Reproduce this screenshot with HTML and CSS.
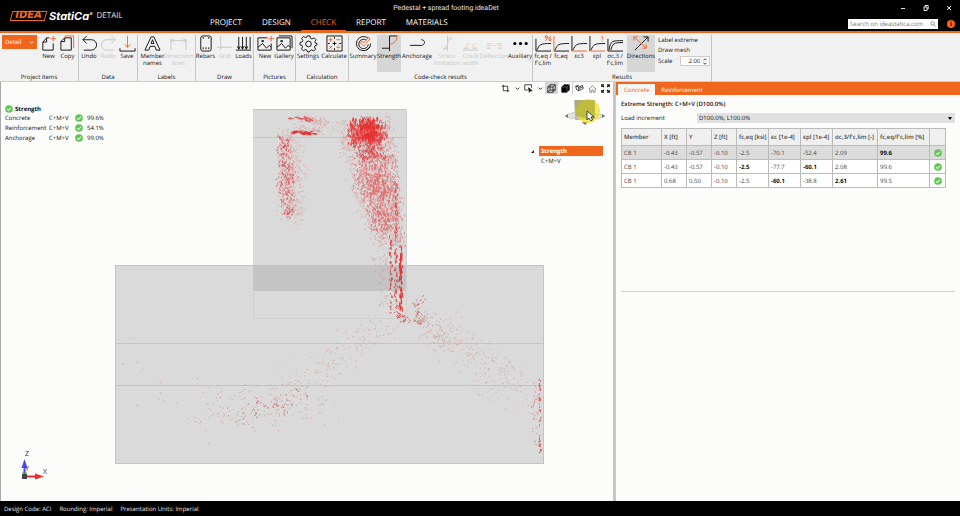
FILE: index.html
```html
<!DOCTYPE html>
<html lang="en">
  <head>
    <meta charset="UTF-8" />
    <meta name="viewport" content="width=device-width, initial-scale=1.0" />
    <title>Pedestal + spread footing.ideaDet</title>
    <link rel="stylesheet" href="styles.css" />
  </head>
  <body>
    <svg class="sprite" aria-hidden="true">
      <symbol id="check" viewBox="0 0 10 10">
        <circle cx="5" cy="5" r="4.8" fill="#62c554" />
        <path d="M2.6 5.2 4.4 6.9 7.5 3.4" fill="none" stroke="#fff" stroke-width="1.3" />
      </symbol>
      <symbol id="chevron" viewBox="0 0 6 6">
        <path d="M1 2 3 4 5 2" fill="none" stroke="currentColor" />
      </symbol>
    </svg>

    <header class="header">
      <div class="brand">
        <span class="brand-idea">IDEA</span>
        <span class="brand-statica">StatiCa<sup>®</sup></span>
        <span class="brand-app">DETAIL</span>
      </div>
      <div class="title">Pedestal + spread footing.ideaDet</div>
      <div class="window-buttons">
        <button aria-label="Minimize"><svg viewBox="0 0 8 8"><path d="M2 4.5h4" /></svg></button>
        <button aria-label="Restore"><svg viewBox="0 0 8 8"><path d="M2 3h3v3.5H2zM3 3V1.500h3.200V5H5" /></svg></button>
        <button aria-label="Close"><svg viewBox="0 0 8 8"><path d="M2 2l4 4M6 2 2 6" /></svg></button>
      </div>
      <nav class="nav">
        <a href="#project">PROJECT</a>
        <a href="#design">DESIGN</a>
        <a href="#check" class="active">CHECK</a>
        <a href="#report">REPORT</a>
        <a href="#materials">MATERIALS</a>
      </nav>
      <div class="search-row">
        <form class="search">
          <input type="text" placeholder="Search on ideastatica.com" aria-label="Search on ideastatica.com" />
          <svg viewBox="0 0 8 8"><circle cx="3.500" cy="3.300" r="2.300" /><path d="M5.200 5 7.500 7.300" /></svg>
        </form>
        <button class="info" aria-label="Info">i</button>
      </div>
    </header>

    <div class="ribbon">
      <section class="group group-items">
        <div class="tools">
          <button class="detail-button">Detail <svg viewBox="0 0 6 6"><use href="#chevron" /></svg></button>
          <button class="tool">
            <svg viewBox="0 0 18 18"><path d="M10 3H7L3 7.500V16h11V9M7 3v4.500H3" /><path class="accent" d="M14 1v6M11 4h6" /></svg>
            New
          </button>
          <button class="tool">
            <svg viewBox="0 0 18 18"><path d="M6 3h7v13H2V7zM6 3v4H2" /><path class="accent" d="M6 1h9.500v13" /></svg>
            Copy
          </button>
        </div>
        <h3>Project items</h3>
      </section>

      <section class="group">
        <div class="tools">
          <button class="tool">
            <svg viewBox="0 0 18 18"><path d="M6 1 2 5l4 4M2 5h9a5.500 5.500 0 0 1 0 11H3" /></svg>
            Undo
          </button>
          <button class="tool" disabled>
            <svg viewBox="0 0 18 18"><path d="m12 1 4 4-4 4M16 5H7a5.500 5.500 0 0 0 0 11h8" /></svg>
            Redo
          </button>
          <button class="tool">
            <svg viewBox="0 0 18 18"><path d="M1 14v3h16v-3" /><path class="accent" d="M9 1v12M6 10l3 3 3-3" /></svg>
            Save
          </button>
        </div>
        <h3>Data</h3>
      </section>

      <section class="group">
        <div class="tools">
          <button class="tool medium">
            <svg viewBox="0 0 18 18"><path d="M1 16 7.500 2h3L17 16h-4l-1.500-4h-5L5 16zM7.500 9 9 5l1.500 4z" /></svg>
            Member<br />names
          </button>
          <button class="tool wide" disabled>
            <svg viewBox="0 0 18 18"><path d="M1 4v12M17 4v12M1 6h16M4 4 1 6l3 2M14 4l3 2-3 2" /></svg>
            Dimension<br />lines
          </button>
        </div>
        <h3>Labels</h3>
      </section>

      <section class="group">
        <div class="tools">
          <button class="tool">
            <svg viewBox="0 0 18 18"><rect x="4" y="1" width="11" height="16" rx="2" /><path d="M6 3h1M12 3h1M6 14h1M9 14h1M12 14h1" stroke-width="2" /></svg>
            Rebars
          </button>
          <button class="tool" disabled>
            <svg viewBox="0 0 18 18"><path d="M5 1v15M1 13h16" /></svg>
            Grid
          </button>
          <button class="tool">
            <svg viewBox="0 0 18 18"><path d="M1 16h16M4 2v13M8 2v13M12 2v13M16 2v13M2.500 12 4 15l1.500-3M6.500 12 8 15l1.500-3M10.500 12l1.500 3 1.500-3" /></svg>
            Loads
          </button>
        </div>
        <h3>Draw</h3>
      </section>

      <section class="group">
        <div class="tools">
          <button class="tool">
            <svg viewBox="0 0 18 18"><path d="M11 3H1v13h14V9M1 13l5-4 4 5 3-3 2 2M5 6h2v1H5z" /><path class="accent" d="M15 1v6M12 4h6" /></svg>
            New
          </button>
          <button class="tool">
            <svg viewBox="0 0 18 18"><path d="M3 1h14v13M1 3h14v13H1zM1 13l5-4 4 5 3-3 2 2M5 6h2v1H5z" /></svg>
            Gallery
          </button>
        </div>
        <h3>Pictures</h3>
      </section>

      <section class="group">
        <div class="tools">
          <button class="tool medium">
            <svg viewBox="0 0 18 18"><path d="M7.500 1h3l.6 2.500 1.500.7L15 3l2 2-1.300 2.200.5 1.300L18 9v1.500l-2 .8-.6 1.500L16.500 15l-2 2-2.200-1.200-1.500.6L10 18H8l-.7-2-1.500-.6L3.600 16.700l-2-2 1.100-2.200-.6-1.500L0 10.500V8l2.300-.7.600-1.500L1.800 3.600l2-2L6 2.800l1-.4z" /><circle cx="9" cy="9.500" r="3" /></svg>
            Settings
          </button>
          <button class="tool wide">
            <svg viewBox="0 0 18 18"><path d="M1 1h16v16H1zM9 2v2M9 7v4M9 14v2M2 9h2M7 9h4M14 9h2" /><path class="accent" d="M3 5h4M5 3v4M11 5h4M3.500 11.500l3 3M6.500 11.500l-3 3M11 13h4M12.500 11.300h1M12.500 14.700h1" /></svg>
            Calculate
          </button>
        </div>
        <h3>Calculation</h3>
      </section>

      <section class="group">
        <div class="tools">
          <button class="tool wide">
            <svg viewBox="0 0 18 18"><path d="M14 3.500A7.500 7.500 0 1 0 16.500 9M12 5.500A5 5 0 1 0 14 10M16 12a8 8 0 0 1-4 4" /><path class="accent" d="m5.500 8 3.500 4 7-8-1.500-1.500L9 8.500 7.500 6.500z" /></svg>
            Summary
          </button>
          <button class="tool medium pressed">
            <svg viewBox="0 0 18 18"><path d="M9 1v16M9 14H1M9 1h8" /><path class="accent" d="M17 1c0 5-3 8-8 9" /></svg>
            Strength
          </button>
          <button class="tool extra">
            <svg viewBox="0 0 18 18"><path d="M1 11h12c4 0 5-6 0-6" /></svg>
            Anchorage
          </button>
          <button class="tool wide" disabled>
            <svg viewBox="0 0 18 18"><path d="M9 1v16M9 4h5M9 14H4" /><path class="accent" d="m13 1-7 15" /></svg>
            Stress<br />limitation
          </button>
          <button class="tool" disabled>
            <svg viewBox="0 0 18 18"><path d="M1 16h16M2 14h5M11 14h5" /><path class="accent" d="M7 9c-3 0-3 3-1 5M14 9c-3 0-3 3-1 5" /></svg>
            Crack<br />width
          </button>
          <button class="tool wide" disabled>
            <svg viewBox="0 0 18 18"><path d="M1 11h4M13 11h4M1 14h4M13 14h4" /><path class="accent" d="M1 9h5c3 3 4 3 6 0h5" /></svg>
            Deflection
          </button>
          <button class="tool medium">
            <svg viewBox="0 0 18 18"><g class="dots"><circle cx="3" cy="9" r="1.700" /><circle cx="9" cy="9" r="1.700" /><circle cx="15" cy="9" r="1.700" /></g></svg>
            Auxiliary
          </button>
        </div>
        <h3>Code-check results</h3>
      </section>

      <section class="group">
        <div class="tools results">
          <button class="tool">
            <svg viewBox="0 0 18 18"><path d="M1 4v13h16M2 16c3-6 3-7 15-7" /><path class="accent" d="M11 6l6-5M11 1h2v2h-2zM15 4h2v2h-2z" /></svg>
            fc,eq /<br />f'c,lim
          </button>
          <button class="tool">
            <svg viewBox="0 0 18 18"><path d="M1 17h16M2 16c3-6 3-7 15-7" /><path class="accent" d="M1 1v16" /></svg>
            fc,eq
          </button>
          <button class="tool">
            <svg viewBox="0 0 18 18"><path d="M1 1v16M2 16c3-6 3-7 15-7" /><path class="accent" d="M1 17h16" /></svg>
            εc3
          </button>
          <button class="tool">
            <svg viewBox="0 0 18 18"><path d="M1 1v16M2 16c3-6 3-7 15-7" /><path class="accent" d="M1 17h16M14 1v4M14 6v1" /></svg>
            εpl
          </button>
          <button class="tool">
            <svg viewBox="0 0 18 18"><path d="M1 4v13h16M2 16C4 6 5 6 17 6M4 16C6 9 7 8 17 8" /></svg>
            σc,3 /<br />f'c,lim
          </button>
          <button class="tool wide pressed">
            <svg viewBox="0 0 18 18"><path d="M2 16 16 2M11 2h5v5" /><path class="accent" d="m1 2 13 12M1 6V2h4M14 10v4h-4" /></svg>
            Directions
          </button>
          <div class="result-options">
            <button>Label extreme</button>
            <button>Draw mesh</button>
            <div class="scale">
              <label for="scale">Scale</label>
              <span class="spinner">
                <input type="text" id="scale" value="2.00" />
                <svg viewBox="0 0 5 8"><path d="M.5 2.500l2-2 2 2M.5 5.500l2 2 2-2" /></svg>
              </span>
            </div>
          </div>
        </div>
        <h3>Results</h3>
      </section>
    </div>

    <main class="main">
      <div class="viewport">
        <svg class="scene" viewBox="1 82 612 419">
          <rect class="block" x="115" y="265" width="429" height="199" />
          <rect class="column" x="253" y="109" width="153" height="156" />
          <rect class="overlap" x="253" y="265" width="153" height="26" />
          <path class="edge" d="M115 265.500h429M115.500 265v199M115 463.500h429M543.500 265v199M253 109.500h153M115 343.500h429M115 385.500h429M253 137.500h153" />
          <path class="edge faint" d="M253.500 291v27.500h153V110" />
          <g id="stress"></g>
          <g class="axes">
            <path d="M24.500 475v-8" stroke="#4747f0" stroke-width="2" />
            <path d="M21.500 468 24.500 459l3 9z" fill="#4747f0" />
            <path d="M25 476.500h12" stroke="#ee2b2b" stroke-width="2" />
            <path d="m35 473.500 9 3-9 3z" fill="#ee2b2b" />
            <path d="M22 474h5v5h-5z" fill="#444" />
            <path d="M22 473h5" stroke="#36a336" />
            <text x="25" y="456">Z</text>
            <text x="43" y="474">X</text>
            <text x="25" y="471">Y</text>
          </g>
        </svg>

        <div class="summary">
          <h2><svg class="ok"><use href="#check" /></svg> Strength</h2>
          <div class="summary-row"><span>Concrete</span><span>C+M+V</span><svg class="ok"><use href="#check" /></svg><span>99.6%</span></div>
          <div class="summary-row"><span>Reinforcement</span><span>C+M+V</span><svg class="ok"><use href="#check" /></svg><span>54.1%</span></div>
          <div class="summary-row"><span>Anchorage</span><span>C+M+V</span><svg class="ok"><use href="#check" /></svg><span>99.0%</span></div>
        </div>

        <div class="view-tools">
          <button aria-label="Crop"><svg viewBox="0 0 12 12"><path d="M3 1v8h8M1 3h8v8" /></svg></button>
          <button class="drop" aria-label="Crop options"><svg viewBox="0 0 6 6"><use href="#chevron" /></svg></button>
          <button aria-label="Select"><svg viewBox="0 0 12 12"><path d="M5 8H1V1h9v4" /><path d="m6 5 5 4H8.500L7 11z" fill="#222" /></svg></button>
          <button class="drop" aria-label="Select options"><svg viewBox="0 0 6 6"><use href="#chevron" /></svg></button>
          <button class="pressed" aria-label="Wireframe"><svg viewBox="0 0 12 12"><path d="M1 4h7v7H1zM1 4l3-3h7L8 4M11 1v7l-3 3M4 1v7h7M4 8l-3 3" /></svg></button>
          <button class="split" aria-label="Solid"><svg viewBox="0 0 12 12"><path d="M1 4l3-3h7v7l-3 3H1z" fill="#000" /><path d="M1 4h7l3-3M8 4v7" stroke="#aaa" stroke-width=".6" /></svg></button>
          <button aria-label="Section"><svg viewBox="0 0 12 12"><path d="m1 3 4 1v5L2 7.500zM5 4l5-2 1 4-6 3M5 6l5-2M1 3l4-1" /></svg></button>
          <button aria-label="Home"><svg viewBox="0 0 12 12"><path d="M1 7 6 2l5 5M2.500 6v5H5V8h2v3h2.500V6" stroke="#777" /></svg></button>
          <button aria-label="Fit"><svg viewBox="0 0 12 12"><path stroke-width="1.500" d="M1 4V1h3M8 1h3v3M11 8v3H8M4 11H1V8M1 1l3 3M11 1 8 4M11 11 8 8M1 11l3-3" /></svg></button>
        </div>

        <svg class="cube" viewBox="0 0 42 28">
          <path d="M1 17Q8 12 21 13T41 17L34 20 29 18Q21 23 13 18L8 20Z" fill="#e3e3e3" stroke="#bbb" stroke-width=".7" />
          <path d="m1 17 3-2v4zM41 17l-3-2v4zM18 23h6l-3 3z" fill="#777" />
          <path d="M10 1h21l-1 20H11z" fill="#bcbcbc" />
          <circle cx="24" cy="12" r="12" fill="#ece428" fill-opacity=".75" />
          <path d="M11 1h20v19h-6L12 17z" fill="#8c8b28" fill-opacity=".4" />
          <path d="M23 12v9l2-2 2 3 1.500-1-1.500-3h3z" fill="#fff" stroke="#222" stroke-width=".8" />
        </svg>

        <div class="tree">
          <svg viewBox="0 0 4 4"><path d="M4 0v4H0z" /></svg>
          <button class="selected">Strength</button>
          <button class="leaf">C+M+V</button>
        </div>
      </div>

      <aside class="panel">
        <nav class="tabs">
          <button class="active">Concrete</button>
          <button>Reinforcement</button>
        </nav>
        <div class="panel-body">
          <h2>Extreme Strength: C+M+V (D100.0%)</h2>
          <div class="field">
            <label for="increment">Load increment</label>
            <span class="select">
              <select id="increment">
                <option>D100.0%, L100.0%</option>
              </select>
            </span>
          </div>
          <table>
            <colgroup>
              <col class="c-member" /><col class="c-num" /><col class="c-num" /><col class="c-num" />
              <col class="c-mid" /><col class="c-mid" /><col class="c-mid" />
              <col class="c-ratio" /><col class="c-limit" /><col class="c-ok" />
            </colgroup>
            <thead>
              <tr>
                <th>Member</th><th>X [ft]</th><th>Y</th><th>Z [ft]</th><th>fc,eq [ksi]</th><th>εc [1e-4]</th>
                <th>εpl [1e-4]</th><th>σc,3/f'c,lim [-]</th><th>fc,eq/f'c,lim [%]</th><th></th>
              </tr>
            </thead>
            <tbody>
              <tr class="selected">
                <td>CB 1</td><td>-0.43</td><td>-0.57</td><td>-0.10</td><td>-2.5</td><td>-70.1</td>
                <td>-52.4</td><td>2.09</td><td><b>99.6</b></td><td><svg class="ok"><use href="#check" /></svg></td>
              </tr>
              <tr>
                <td>CB 1</td><td>-0.43</td><td>-0.57</td><td>-0.10</td><td><b>-2.5</b></td><td>-77.7</td>
                <td><b>-60.1</b></td><td>2.08</td><td>99.6</td><td><svg class="ok"><use href="#check" /></svg></td>
              </tr>
              <tr>
                <td>CB 1</td><td>0.68</td><td>0.50</td><td>-0.10</td><td>-2.5</td><td><b>-60.1</b></td>
                <td>-38.8</td><td><b>2.61</b></td><td>99.5</td><td><svg class="ok"><use href="#check" /></svg></td>
              </tr>
            </tbody>
          </table>
          <hr />
        </div>
      </aside>
    </main>

    <footer class="status">
      <span>Design Code: ACI</span>
      <span>Rounding: Imperial</span>
      <span>Presentation Units: Imperial</span>
    </footer>

    <script src="script.js"></script>
  </body>
</html>
```

FILE: styles.css
```css
* {
  box-sizing: border-box;
}

body {
  margin: 0;
  min-height: 100vh;
  display: flex;
  flex-direction: column;
  font-family: "Open Sans", "Noto Sans", sans-serif;
  font-size: 6px;
  line-height: 8px;
  text-rendering: geometricPrecision;
  color: #111;
  background: #fcfcfb;
}

button,
input,
select {
  font: inherit;
  color: inherit;
  padding: 0;
  border: none;
  background: none;
  text-rendering: inherit;
}

h2,
h3 {
  margin: 0;
  font-size: 6px;
}

svg {
  display: block;
  fill: none;
  stroke: currentColor;
  overflow: visible;
}

.sprite {
  position: absolute;
  width: 0;
  height: 0;
}

.ok {
  width: 8px;
  height: 8px;
  stroke: none;
}

/* header */
.header {
  display: grid;
  grid-template-columns: 200px 1fr 268px;
  grid-template-rows: 16px 15px;
  background: #000;
  color: #e4e4e4;
  border-bottom: 2px solid #f0661c;
}

.brand {
  grid-row: 1 / 3;
  display: flex;
  align-items: center;
  padding-left: 11px;
  white-space: nowrap;
}

.brand-idea {
  position: relative;
  width: 35px;
  line-height: 10px;
  text-align: center;
  font-family: "DejaVu Sans", sans-serif;
  font-size: 10px;
  font-weight: bold;
  font-style: italic;
  color: #f0661c;
}

.brand-idea::before {
  content: "";
  position: absolute;
  inset: 0;
  border: 1px solid #f0661c;
  transform: skewX(-15deg);
}

.brand-statica {
  margin-left: 3px;
  font-family: Inter, sans-serif;
  font-size: 11px;
  font-weight: bold;
  font-style: italic;
  color: #fff;
}

.brand-statica sup {
  font-size: 5px;
  font-weight: normal;
  line-height: 0;
  vertical-align: 4px;
}

.brand-app {
  margin-left: 4px;
  font-size: 8px;
}

.title {
  text-align: center;
  font-family: Roboto, sans-serif;
  font-size: 7px;
  line-height: 16px;
}

.window-buttons {
  display: flex;
  justify-content: flex-end;
  align-items: center;
  gap: 15px;
  padding-right: 7px;
}

.window-buttons svg {
  width: 8px;
  height: 8px;
}

.nav {
  display: flex;
}

.nav a {
  padding: 0 10px;
  font-size: 8px;
  line-height: 14px;
  color: #fff;
  text-decoration: none;
}

.nav .active {
  color: #f0661c;
  border-bottom: 1px solid #f0661c;
}

.search-row {
  display: flex;
  justify-content: flex-end;
  align-items: center;
  gap: 9px;
  padding-right: 5px;
}

.search {
  display: flex;
  align-items: center;
  width: 90px;
  height: 10px;
  padding: 0 2px;
  background: #fff;
  color: #777;
}

.search input {
  flex: 1;
  min-width: 0;
}

.search input::placeholder {
  color: #777;
}

.search svg {
  width: 6px;
  height: 6px;
}

.info {
  width: 8px;
  height: 8px;
  border-radius: 50%;
  background: #f0661c;
  color: #000;
  font-weight: bold;
}

/* ribbon */
.ribbon {
  display: grid;
  grid-template-columns: 79px 59px 58px 58px 42px 53px 184px 179px 1fr;
  height: 49px;
  padding-top: 2px;
  background: #f1f1f1;
  border-bottom: 1px solid #ccc;
}

.group {
  display: flex;
  flex-direction: column;
  justify-content: space-between;
  border-right: 1px solid #c4c4c4;
}

.group h3 {
  font-weight: normal;
  text-align: center;
}

.tools {
  display: flex;
  justify-content: center;
}

.tool {
  display: flex;
  flex-direction: column;
  align-items: center;
  justify-content: flex-start;
  width: 19px;
  height: 37px;
  line-height: 7px;
  white-space: nowrap;
  color: #111;
  flex: none;
}

.tool svg {
  width: 17px;
  height: 17px;
  margin-bottom: 1px;
}

.tool:disabled {
  color: #c8c8c8;
}

.tool:disabled .accent {
  stroke: #f3c9b5;
}

.medium {
  width: 24px;
}

.wide {
  width: 28px;
}

.extra {
  width: 32px;
}

.pressed {
  background: #d6d6d6;
}

.accent {
  stroke: #f0662c;
}

.dots {
  fill: #000;
  stroke: none;
}

.group-items .tools {
  justify-content: flex-start;
  padding-left: 2px;
}

.detail-button {
  display: flex;
  align-items: center;
  justify-content: space-between;
  width: 35px;
  height: 14px;
  margin-right: 2px;
  padding: 0 3px;
  background: #f0661c;
  color: #fff;
}

.detail-button svg {
  width: 5px;
  height: 5px;
}

.results {
  justify-content: flex-start;
  padding-left: 1px;
}

.results .tool:not(.wide) {
  width: 18px;
}

.results .wide {
  margin-left: 3px;
}

.result-options {
  display: flex;
  flex-direction: column;
  align-items: flex-start;
  gap: 2px;
  padding: 1px 0 0 3px;
}

.scale {
  display: flex;
  align-items: center;
  gap: 8px;
}

.spinner {
  display: flex;
  align-items: center;
  width: 30px;
  height: 10px;
  padding-right: 2px;
  background: #fff;
  border: 1px solid #ccc;
}

.spinner input {
  flex: 1;
  min-width: 0;
  padding-right: 3px;
  text-align: right;
}

.spinner svg {
  width: 4px;
  height: 7px;
}

/* model view */
.main {
  flex: 1;
  display: grid;
  grid-template-columns: minmax(0, 1fr) 347px;
}

.viewport {
  position: relative;
  border-left: 1px solid #aaa;
}

.scene {
  width: 100%;
  height: 100%;
  stroke: none;
}

.block,
.column {
  fill: #dadada;
}

.overlap {
  fill: #c4c4c4;
}

.edge {
  fill: none;
  stroke: #c3c3c3;
}

.edge.faint {
  stroke: #cfcfcf;
}

.axes text {
  font-size: 7px;
  fill: #333;
}

.summary {
  position: absolute;
  left: 4px;
  top: 23px;
}

.summary h2 {
  display: flex;
  align-items: center;
  gap: 2px;
}

.summary-row {
  display: grid;
  grid-template-columns: 44px 26px 12px auto;
  align-items: center;
  line-height: 10px;
}

.view-tools {
  position: absolute;
  right: 1px;
  top: 0;
  display: flex;
}

.view-tools button {
  display: flex;
  align-items: center;
  justify-content: center;
  width: 13px;
  height: 12px;
}

.view-tools svg {
  width: 9px;
  height: 9px;
}

.view-tools .drop {
  width: 10px;
}

.view-tools .drop svg {
  width: 5px;
}

.view-tools .split {
  width: 15px;
  border-right: 1px solid #ccc;
}

.cube {
  position: absolute;
  right: 7px;
  top: 17px;
  width: 42px;
  height: 28px;
  stroke: none;
}

.tree {
  position: absolute;
  right: 10px;
  top: 64px;
  display: grid;
  grid-template-columns: 8px 64px;
  align-items: center;
}

.tree svg {
  width: 3px;
  height: 3px;
  fill: #222;
  stroke: none;
}

.tree button {
  padding-left: 2px;
  line-height: 10px;
  text-align: left;
}

.tree .selected {
  background: #f0661c;
  color: #fff;
  font-weight: bold;
}

.tree .leaf {
  grid-column: 2;
}

/* results panel */
.panel {
  border-left: 3px solid #c6c6c6;
}

.tabs {
  display: flex;
  height: 13px;
  padding: 2px 2px 0;
  background: #f0661c;
}

.tabs button {
  padding: 0 6px;
  color: #fff;
}

.tabs .active {
  background: #f6f6f6;
  color: #f0661c;
}

.panel-body {
  padding: 5px 5px 0;
}

.panel-body h2 {
  font-weight: 600;
}

.field {
  display: grid;
  grid-template-columns: 76px 1fr;
  align-items: center;
  margin: 5px 0;
}

.select {
  position: relative;
}

.select::after {
  content: "";
  position: absolute;
  right: 3px;
  top: 4px;
  border: 2px solid transparent;
  border-top: 3px solid #000;
  border-bottom: none;
}

.select select {
  display: block;
  width: 100%;
  height: 10px;
  padding-left: 2px;
  appearance: none;
  background: #e0e0e0;
}

table {
  width: 325px;
  table-layout: fixed;
  border-collapse: collapse;
  background: #fff;
}

th,
td {
  height: 14px;
  padding: 0 2px;
  border: 1px solid #bbb;
  text-align: left;
  white-space: nowrap;
  color: #444;
}

th {
  height: 17px;
  background: #efefef;
  font-weight: 600;
}

td b {
  color: #111;
}

tr.selected {
  background: #dcdcdc;
}

.c-member {
  width: 40px;
}

.c-num {
  width: 25px;
}

.c-mid {
  width: 32px;
}

.c-ratio {
  width: 45px;
}

.c-limit {
  width: 52px;
}

td .ok {
  margin: auto;
}

hr {
  margin: 103px 0 0;
  border: none;
  border-top: 1px solid #d4d4d4;
}

/* status bar */
.status {
  display: flex;
  align-items: center;
  gap: 8px;
  height: 15px;
  padding-left: 4px;
  background: #000;
  color: #e4e4e4;
}
```

FILE: script.js
```js
const stress = document.getElementById("stress");
let seed = 7;

function random() {
  seed = (seed * 16807) % 2147483647;
  return seed / 2147483647;
}

// between -1 and 1, more often near 0
function spread() {
  return random() + random() - 1;
}

// short strokes scattered along the line from (x1, y1) to (x2, y2)
function scatter(x1, y1, x2, y2, width1, width2, count, color, size, dx, dy, height = 3) {
  let d = "";
  for (let i = 0; i < count; i++) {
    const t = random();
    const x = x1 + (x2 - x1) * t + spread() * (width1 + (width2 - width1) * t);
    const y = y1 + (y2 - y1) * t + spread() * height;
    const slant = random() < 0.5 ? -dx : dx;
    d += `M${x.toFixed(1)} ${y.toFixed(1)}l${(slant * (0.5 + random())).toFixed(1)} ${(dy * (0.5 + random())).toFixed(1)}`;
  }
  const path = document.createElementNS("http://www.w3.org/2000/svg", "path");
  path.setAttribute("d", d);
  path.setAttribute("stroke", color);
  path.setAttribute("stroke-width", size);
  stress.appendChild(path);
}

// left side of the pedestal
scatter(290, 118, 312, 119, 2, 2, 34, "#e04040", 0.8, 2.5, 0.6);
scatter(294, 132, 314, 133, 2, 2, 50, "#e02c2c", 0.9, 3, 0.6, 2);
scatter(305, 117, 325, 123, 10, 10, 60, "#d98a8a", 0.6, 1.2, 0.8, 5);
scatter(312, 122, 345, 130, 8, 4, 60, "#d99", 0.5, 1, 0.8, 9);
scatter(290, 130, 320, 131, 14, 10, 70, "#d98080", 0.6, 1.2, 0.8, 7);
scatter(287, 134, 292, 215, 12, 16, 330, "#dc9a9a", 0.7, 0.8, 1.4, 6);
scatter(283, 136, 288, 180, 8, 9, 140, "#d84848", 0.7, 0.7, 1.7);
scatter(284, 178, 290, 218, 12, 5, 130, "#d85858", 0.7, 0.7, 1.7);
scatter(296, 140, 297, 225, 14, 12, 200, "#dba8a8", 0.6, 1, 1, 8);

// right side, dense at the top and fading down
scatter(362, 122, 378, 195, 26, 28, 650, "#dd9a9a", 0.7, 0.8, 1.4);
scatter(370, 175, 387, 240, 28, 18, 600, "#dd9494", 0.7, 0.8, 1.4, 6);
scatter(366, 122, 379, 195, 21, 26, 560, "#dc5c5c", 0.7, 0.7, 1.7);
scatter(377, 175, 387, 232, 24, 15, 420, "#dc6464", 0.7, 0.7, 1.7);
scatter(367, 118, 371, 140, 18, 18, 430, "#e63030", 0.8, 0.7, 2.6);
scatter(352, 122, 354, 145, 5, 6, 70, "#e23838", 0.8, 0.7, 2.2);
scatter(367, 138, 373, 158, 18, 17, 150, "#e04040", 0.8, 0.9, 2);
scatter(345, 120, 345, 160, 6, 6, 60, "#d88", 0.6, 0.8, 1.2);
scatter(386, 115, 393, 160, 7, 7, 90, "#d88", 0.6, 0.8, 1.2);
scatter(391, 155, 400, 245, 8, 9, 190, "#d68080", 0.7, 0.4, 1.8);
scatter(378, 235, 388, 310, 14, 13, 100, "#d59c9c", 0.8, 0.8, 1.2);
scatter(391, 235, 391, 312, 2, 2, 48, "#d84848", 0.9, 0.2, 2.2);
scatter(396, 175, 396, 300, 2, 2, 70, "#d84848", 0.9, 0.2, 2.4);
scatter(401, 245, 401, 308, 2, 2, 60, "#e53030", 1, 0.2, 3.5);
scatter(397, 306, 407, 323, 5, 5, 28, "#d84848", 0.9, 1.5, 2, 5);
scatter(418, 298, 418, 324, 8, 8, 34, "#c86464", 0.9, 1.5, 1.6, 4);

// struts spreading in the footing
scatter(423, 312, 445, 345, 16, 24, 90, "#d09090", 0.8, 1, 1, 10);
scatter(432, 325, 510, 378, 28, 32, 170, "#d3a0a0", 0.8, 1, 0.8, 22);
scatter(480, 372, 535, 400, 22, 20, 90, "#d3a8a8", 0.8, 1, 0.8, 26);
scatter(385, 322, 300, 385, 24, 30, 150, "#d09c9c", 0.8, 1, 0.7, 18);
scatter(320, 400, 210, 412, 34, 30, 170, "#d09090", 0.8, 1, 0.9, 26);
scatter(300, 400, 245, 412, 20, 14, 50, "#cc6868", 1, 1.3, 0.8, 18);
scatter(125, 370, 205, 430, 25, 25, 18, "#d09090", 0.8, 1, 1, 40);
scatter(535, 380, 534, 445, 4, 4, 30, "#d09090", 0.8, 0.4, 1.5);
scatter(540, 370, 540, 451, 1, 1, 36, "#d85050", 0.9, 0.4, 2);
```
